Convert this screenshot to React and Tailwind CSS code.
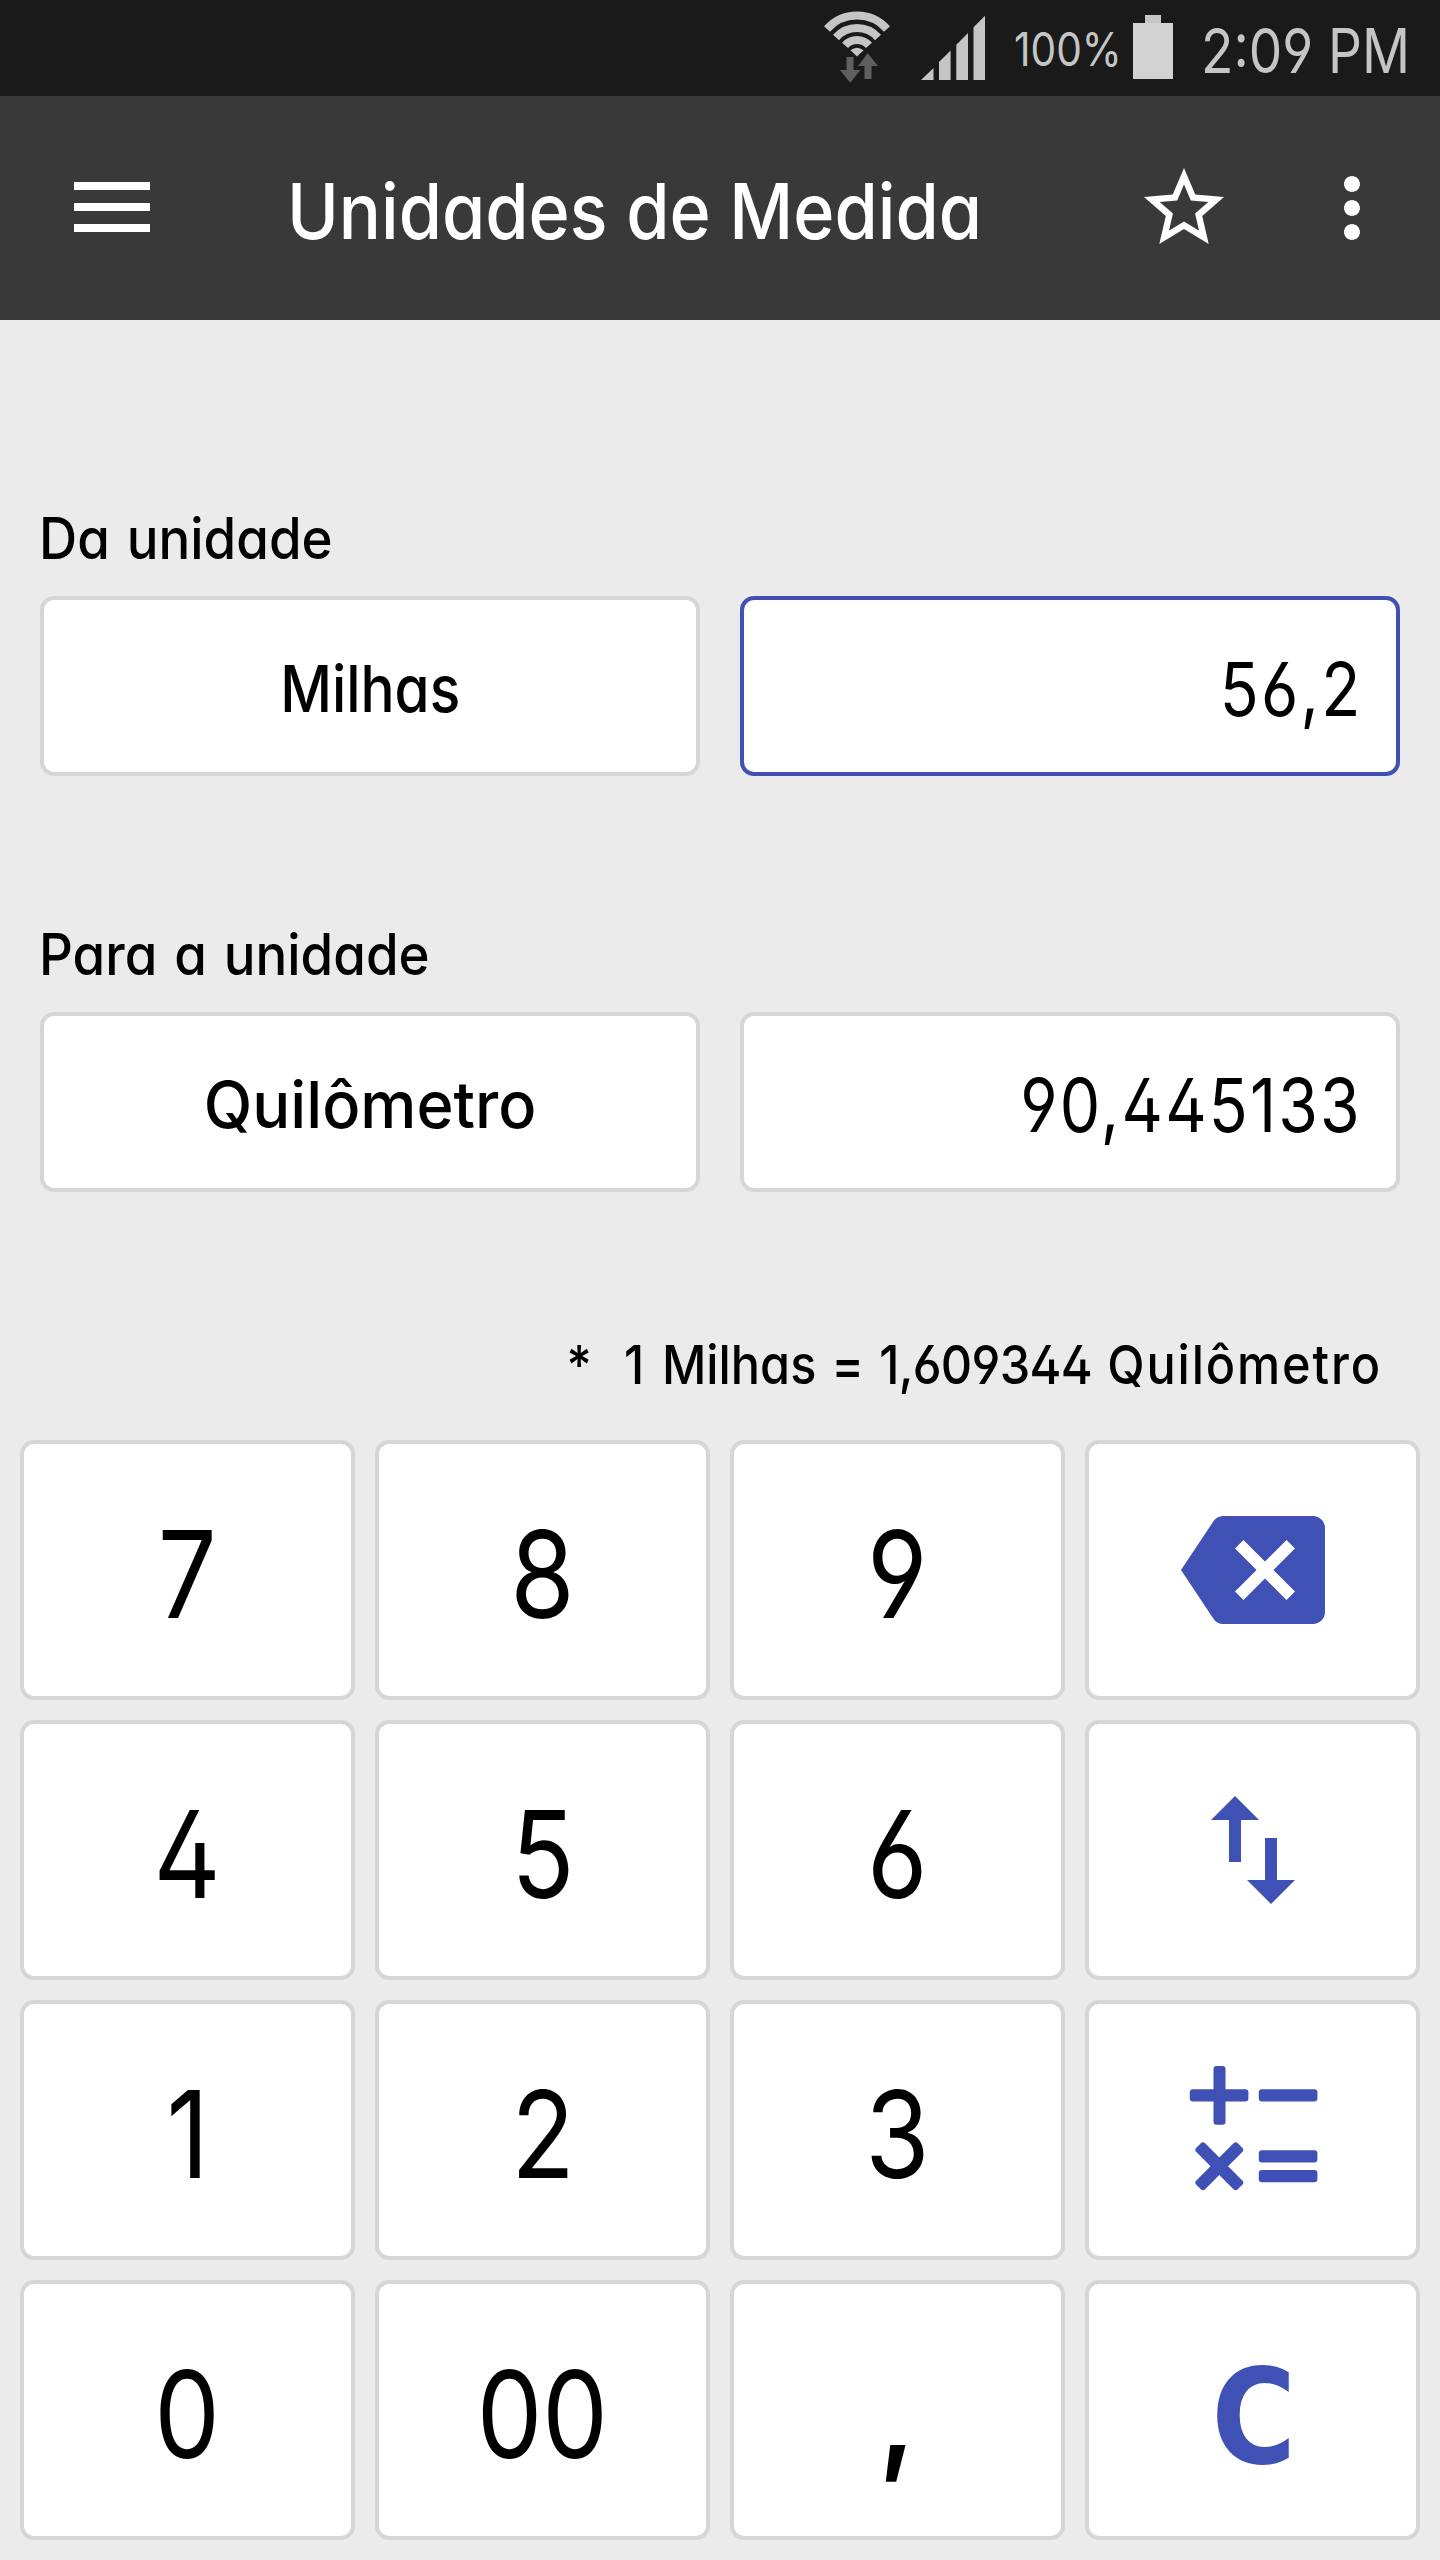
import React from "react";
import { MdBackspace, MdImportExport, MdMoreVert } from "react-icons/md";

const keys = [
  "7", "8", "9", "backspace",
  "4", "5", "6", "swap",
  "1", "2", "3", "operators",
  "0", "00", ",", "clear",
];

function StatusBar() {
  return (
    <div className="h-24 bg-[#1a1a1a] flex items-start justify-end pr-[34px] text-[#c5c5c5]">
      <svg className="w-[66px] h-24 shrink-0" viewBox="0 0 66 96" fill="none">
        <g stroke="#c5c5c5" strokeWidth="8">
          <path d="M3 29A40 40 0 0 1 63 29" />
          <path d="M12 37.5A28 28 0 0 1 54 37.5" />
          <path d="M21 45.4A16 16 0 0 1 45 45.4" />
        </g>
        <path d="M33 56.5L26.5 50.3Q33 45 39.5 50.3z" fill="#c5c5c5" />
        <path
          d="M22.5 57h7v13h6.9L26.2 82.7 16 70h6.5zM43.8 53.3L54 66h-6.5v13h-7V66H34z"
          fill="#5f5f5f"
        />
      </svg>
      <svg className="w-16 h-24 ml-[31px] shrink-0" viewBox="0 0 64 96" fill="#c5c5c5">
        <path d="M0 80h12.5V68zM18 80h11.6V50.5L18 62zM35.3 80H47V33L35.3 44.7zM52.5 80H64V15.7L52.5 27.3z" />
      </svg>
      <span className="w-[105px] ml-[29px] h-[98px] flex items-center">
        <span className="text-[47px] whitespace-nowrap origin-left scale-x-[0.865]">100%</span>
      </span>
      <svg className="w-10 h-24 ml-[14px] shrink-0" viewBox="0 0 40 96">
        <path d="M12 15h16v8H12z" fill="#c5c5c5" />
        <path d="M0 23h40v56H0z" fill="#d2d2d2" />
      </svg>
      <span className="w-[205px] ml-[28px] h-[101px] flex items-center">
        <span className="text-[62px] whitespace-nowrap origin-left scale-x-[0.857]">2:09 PM</span>
      </span>
    </div>
  );
}

function Header() {
  return (
    <header className="h-56 bg-[#393939] flex items-center text-white">
      <button className="ml-[74px] mb-[2px] w-[76px] flex flex-col gap-[13px]">
        <span className="h-2 w-full bg-white"></span>
        <span className="h-2 w-full bg-white"></span>
        <span className="h-2 w-full bg-white"></span>
      </button>
      <h1 className="ml-[137px] mt-[8px] flex-1 text-[77px] font-medium whitespace-nowrap">
        <span className="inline-block origin-left scale-x-[0.91]">Unidades de Medida</span>
      </h1>
      <svg className="w-24 h-24 mr-[72px]" viewBox="0 0 24 24" fill="currentColor">
        <path d="M22 9.24l-7.19-.62L12 2 9.19 8.63 2 9.24l5.46 4.73L5.82 21 12 17.27 18.18 21l-1.63-7.03L22 9.24zM12 15.4l-3.76 2.27 1-4.28-3.32-2.88 4.38-.38L12 6.1l1.71 4.04 4.38.38-3.32 2.88 1 4.28L12 15.4z" />
      </svg>
      <MdMoreVert className="w-24 h-24 mr-10" />
    </header>
  );
}

function UnitRow({ label, unit, unitClass, value, active }) {
  return (
    <section>
      <p className="h-[116px] flex items-center text-[57px] font-medium leading-none">
        <span className="-ml-px origin-left scale-x-[0.927] [word-spacing:3px]">{label}</span>
      </p>
      <div className="grid grid-cols-2 gap-10">
        <button className="h-[180px] rounded-[14px] border-4 border-[#d6d6d6] bg-white pt-[6px] flex items-center justify-center text-[65px] font-medium">
          <span className={unitClass}>{unit}</span>
        </button>
        <div
          className={`h-[180px] rounded-[14px] border-4 bg-white pt-[6px] pr-[34px] flex items-center justify-end text-[74px] tracking-[2.5px] ${
            active ? "border-[#3f51b5]" : "border-[#d6d6d6]"
          }`}
        >
          <span className="origin-right scale-x-[0.867]">{value}</span>
        </div>
      </div>
    </section>
  );
}

function OperatorsIcon() {
  return (
    <svg className="w-36 h-36" viewBox="110.5 68 144 144" fill="currentColor">
      <rect x="143" y="76" width="12" height="58.7" rx="3" />
      <rect x="119.3" y="99.3" width="58.6" height="12.2" rx="3" />
      <rect x="188.3" y="99.3" width="58.6" height="12.2" rx="3" />
      <rect x="188.3" y="160.3" width="58.6" height="12.2" rx="3" />
      <rect x="188.3" y="180.1" width="58.6" height="12.2" rx="3" />
      <g transform="rotate(45 148.8 176.2)">
        <rect x="142.6" y="146.9" width="12.4" height="58.6" rx="3" />
        <rect x="119.5" y="170" width="58.6" height="12.4" rx="3" />
      </g>
    </svg>
  );
}

function KeyContent({ name }) {
  switch (name) {
    case "backspace":
      return <MdBackspace className="w-36 h-36" />;
    case "swap":
      return <MdImportExport className="w-36 h-36" />;
    case "operators":
      return <OperatorsIcon />;
    case "clear":
      return (
        <span className="pt-[14px] pl-1 scale-x-[0.88] font-['DejaVu_Sans',sans-serif] text-[131px] font-bold leading-none">
          C
        </span>
      );
    default:
      return (
        <span className={`pt-2 text-[121px] leading-none text-black ${name === "," ? "font-bold" : ""}`}>
          <span className="inline-block scale-x-[0.86]">{name}</span>
        </span>
      );
  }
}

function Keypad() {
  return (
    <div className="grid grid-cols-4 gap-5 px-5">
      {keys.map((key) => (
        <button
          key={key}
          className="h-[260px] rounded-[14px] border-4 border-[#d6d6d6] bg-white text-[#3f51b5] flex items-center justify-center"
        >
          <KeyContent name={key} />
        </button>
      ))}
    </div>
  );
}

function App() {
  return (
    <div className="w-[1440px] h-[2560px] bg-[#ebebeb] text-black font-['Inter','Liberation_Sans',sans-serif] [font-feature-settings:'cv11','cv02','cv03','cv04']">
      <StatusBar />
      <Header />
      <main className="px-10 pt-40 flex flex-col gap-[120px]">
        <UnitRow
          label="Da unidade"
          unit="Milhas"
          unitClass="scale-x-[0.872]"
          value="56,2"
          active
        />
        <UnitRow
          label="Para a unidade"
          unit="Quilômetro"
          unitClass="scale-x-[0.972]"
          value="90,445133"
        />
      </main>
      <p className="mt-[98px] mb-1 mr-[60px] h-[146px] pt-[2px] flex items-center justify-end text-[54px] font-medium whitespace-pre">
        <span className="origin-right scale-x-[0.9] [word-spacing:2.5px]">
          <span className="tracking-[2px]">*</span>
          {"  1 "}
          <span className="ml-[3px]">Milhas</span>
          {" = "}
          <span className="tracking-[-0.75px]">1,609344</span>{" "}
          <span className="tracking-[2.1px] -mr-[2.1px]">Quilômetro</span>
        </span>
      </p>
      <Keypad />
    </div>
  );
}

export default App;
